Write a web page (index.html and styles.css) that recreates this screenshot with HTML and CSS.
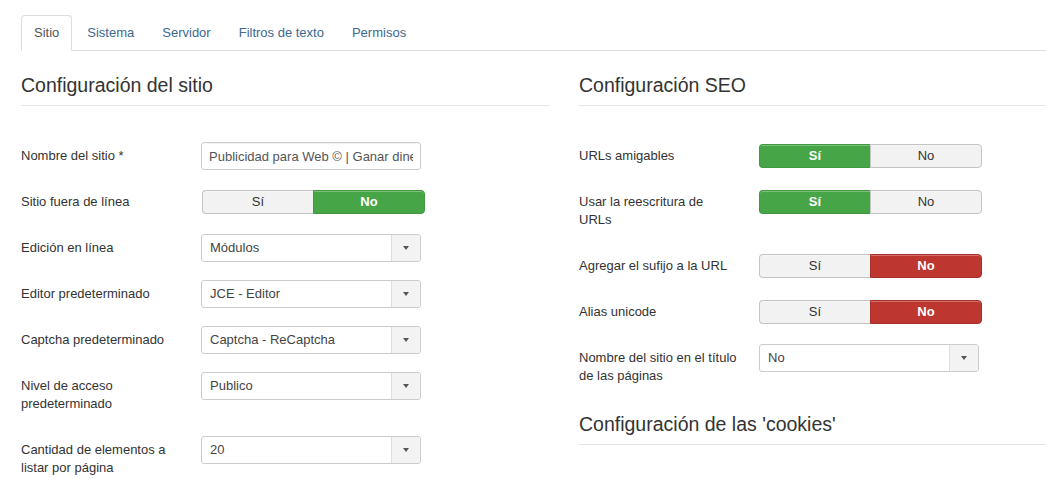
FILE: index.html
```html
<!DOCTYPE html>
<html lang="es">
<head>
<meta charset="utf-8">
<title>Configuración global</title>
<link rel="stylesheet" href="styles.css">
</head>
<body>
<ul class="tabs">
  <li class="tab active"><a>Sitio</a></li>
  <li class="tab"><a>Sistema</a></li>
  <li class="tab"><a>Servidor</a></li>
  <li class="tab"><a>Filtros de texto</a></li>
  <li class="tab"><a>Permisos</a></li>
</ul>
<div class="columns">
  <section class="col">
    <h3 class="legend">Configuración del sitio</h3>
    <div class="group">
      <div class="label">Nombre del sitio *</div>
      <input class="text-input" type="text" value="Publicidad para Web © | Ganar dinero por Internet">
    </div>
    <div class="group">
      <div class="label">Sitio fuera de línea</div>
      <div class="toggle"><span class="opt">Sí</span><span class="opt on-green">No</span></div>
    </div>
    <div class="group">
      <div class="label">Edición en línea</div>
      <div class="select"><span class="value">Módulos</span><span class="arrow"><i class="caret"></i></span></div>
    </div>
    <div class="group">
      <div class="label">Editor predeterminado</div>
      <div class="select"><span class="value">JCE - Editor</span><span class="arrow"><i class="caret"></i></span></div>
    </div>
    <div class="group">
      <div class="label">Captcha predeterminado</div>
      <div class="select"><span class="value">Captcha - ReCaptcha</span><span class="arrow"><i class="caret"></i></span></div>
    </div>
    <div class="group">
      <div class="label">Nivel de acceso predeterminado</div>
      <div class="select"><span class="value">Publico</span><span class="arrow"><i class="caret"></i></span></div>
    </div>
    <div class="group">
      <div class="label">Cantidad de elementos a listar por página</div>
      <div class="select"><span class="value">20</span><span class="arrow"><i class="caret"></i></span></div>
    </div>
  </section>
  <section class="col">
    <h3 class="legend">Configuración SEO</h3>
    <div class="group">
      <div class="label">URLs amigables</div>
      <div class="toggle wide"><span class="opt on-green">Sí</span><span class="opt">No</span></div>
    </div>
    <div class="group">
      <div class="label">Usar la reescritura de URLs</div>
      <div class="toggle wide"><span class="opt on-green">Sí</span><span class="opt">No</span></div>
    </div>
    <div class="group">
      <div class="label">Agregar el sufijo a la URL</div>
      <div class="toggle wide"><span class="opt">Sí</span><span class="opt on-red">No</span></div>
    </div>
    <div class="group">
      <div class="label">Alias unicode</div>
      <div class="toggle wide"><span class="opt">Sí</span><span class="opt on-red">No</span></div>
    </div>
    <div class="group">
      <div class="label">Nombre del sitio en el título de las páginas</div>
      <div class="select"><span class="value">No</span><span class="arrow"><i class="caret"></i></span></div>
    </div>
    <h3 class="legend legend-next">Configuración de las 'cookies'</h3>
  </section>
</div>
</body>
</html>
```

FILE: styles.css
```css
html, body {
  overflow: hidden;
}
body {
  margin: 0;
  padding: 15px 0 0 21px;
  font-family: "Liberation Sans", Arial, Helvetica, sans-serif;
  font-size: 13px;
  line-height: 18px;
  color: #333;
  background: #fff;
}
.tabs {
  list-style: none;
  margin: 0;
  padding: 0;
  display: flex;
  border-bottom: 1px solid #ddd;
}
.tab {
  margin-right: 2px;
  margin-bottom: -1px;
}
.tab a {
  display: block;
  padding: 8px 12px;
  line-height: 18px;
  border: 1px solid transparent;
  border-radius: 4px 4px 0 0;
  color: #3d6890;
}
.tab.active a {
  color: #555;
  background: #fff;
  border-color: #ddd #ddd transparent;
}
.columns {
  display: grid;
  grid-template-columns: 528px minmax(0, 1fr);
  column-gap: 30px;
}
.col {
  min-width: 0;
}
.legend {
  margin: 14px 0 36px;
  font-size: 19.5px;
  font-weight: normal;
  line-height: 40px;
  color: #333;
  border-bottom: 1px solid #e5e5e5;
}
.legend-next {
  margin-top: -4px;
}
.group {
  display: flex;
  align-items: flex-start;
  margin-bottom: 18px;
}
.label {
  width: 160px;
  flex: none;
  margin-right: 20px;
  padding: 5px 0;
  line-height: 18px;
  color: #333;
}
.text-input {
  box-sizing: border-box;
  width: 220px;
  height: 28px;
  margin: 0;
  padding: 4px 7px;
  border: 1px solid #ccc;
  border-radius: 3px;
  font-family: "Liberation Sans", Arial, Helvetica, sans-serif;
  font-size: 13px;
  color: #555;
  background: #fff;
  box-shadow: inset 0 1px 1px rgba(0,0,0,0.05);
}
.toggle {
  box-sizing: border-box;
  display: flex;
  width: 223px;
  height: 24px;
  margin-top: 2px;
  margin-left: 1px;
}
.toggle.wide {
  margin-left: 0;
}
.opt {
  flex: 1;
  display: flex;
  align-items: center;
  justify-content: center;
  background: #f2f2f2;
  border: 1px solid #c4c4c4;
  color: #333;
  box-shadow: inset 0 1px 0 rgba(255,255,255,0.3);
}
.opt:first-child {
  border-radius: 4px 0 0 4px;
  border-right: 0;
}
.opt:last-child {
  border-radius: 0 4px 4px 0;
}
.opt.on-green {
  background: #46a546;
  border-color: #3f9a3f;
  color: #fff;
  font-weight: bold;
}
.opt.on-red {
  background: #bd362f;
  border-color: #a9302a;
  color: #fff;
  font-weight: bold;
}
.select {
  box-sizing: border-box;
  display: flex;
  width: 220px;
  height: 28px;
  border: 1px solid #ccc;
  border-radius: 3px;
  background: #fff;
  overflow: hidden;
}
.select .value {
  flex: 1;
  padding: 4px 8px;
  line-height: 18px;
  color: #444;
}
.select .arrow {
  width: 28px;
  display: flex;
  align-items: center;
  justify-content: center;
  background: #f3f3f3;
  border-left: 1px solid #ddd;
}
.caret {
  width: 0;
  height: 0;
  border-left: 3.5px solid transparent;
  border-right: 3.5px solid transparent;
  border-top: 4px solid #555;
}
```
